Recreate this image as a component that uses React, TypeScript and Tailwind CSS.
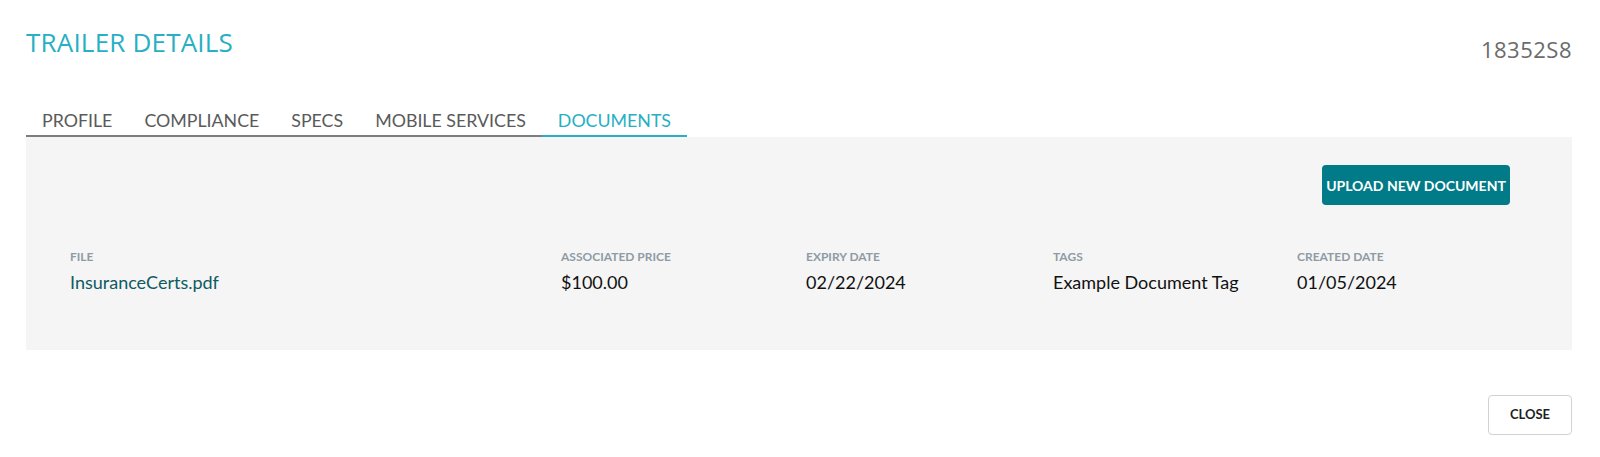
import { useState } from "react";

const tabs = ["PROFILE", "COMPLIANCE", "SPECS", "MOBILE SERVICES", "DOCUMENTS"];

const documents = [
	{
		id: 1,
		file: "InsuranceCerts.pdf",
		price: "$100.00",
		expiry: "02/22/2024",
		tags: "Example Document Tag",
		created: "01/05/2024",
	},
];

function Label({ children }: { children: React.ReactNode }) {
	return (
		<div className="text-[12px] leading-[14px] font-bold uppercase text-[#8e9ba4]">
			{children}
		</div>
	);
}

export default function App() {
	const [activeTab, setActiveTab] = useState("DOCUMENTS");

	return (
		<div className="h-[457px] w-full bg-white font-['Lato',sans-serif]">
			<div className="pl-[26px] pr-[28px]">
				{/* Header */}
				<div className="flex items-start justify-between pt-[29px]">
					<h1 className="font-['Open_Sans',sans-serif] text-[26px] leading-[26px] font-normal tracking-[0.2px] text-[#27afc3]">
						TRAILER DETAILS
					</h1>
					<div className="mt-[9px] font-['Open_Sans',sans-serif] text-[22px] leading-[22px] tracking-[0.5px] text-[#6b6b6b]">
						18352S8
					</div>
				</div>

				{/* Tabs */}
				<div className="mt-[50px] flex">
					{tabs.map((tab) => (
						<button
							key={tab}
							type="button"
							onClick={() => setActiveTab(tab)}
							className={`border-b-2 px-4 pb-[5px] text-[17.8px] leading-[20px] ${
								activeTab === tab
									? "border-[#27afc3] text-[#27afc3]"
									: "border-[#7d7d7d] text-[#5a5a5a]"
							}`}
						>
							{tab}
						</button>
					))}
				</div>

				{/* Documents panel */}
				<div className="h-[213px] bg-[#f5f5f5] pt-[28px] pr-[62px] pl-[44px]">
					<div className="flex justify-end">
						<button
							type="button"
							className="h-[40px] w-[188px] rounded-[4px] bg-[#017b87] text-[14px] font-bold text-white"
						>
							UPLOAD NEW DOCUMENT
						</button>
					</div>

					{documents.map((doc) => (
						<div
							key={doc.id}
							className="mt-[45px] grid grid-cols-[491px_245px_247px_244px_1fr]"
						>
							<div>
								<Label>File</Label>
								<a className="mt-[7px] block text-[18px] leading-[22px] text-[#0e5b64]">
									{doc.file}
								</a>
							</div>
							<div>
								<Label>Associated Price</Label>
								<div className="mt-[7px] text-[18px] leading-[22px] text-[#111]">{doc.price}</div>
							</div>
							<div>
								<Label>Expiry Date</Label>
								<div className="mt-[7px] text-[18px] leading-[22px] text-[#111]">{doc.expiry}</div>
							</div>
							<div>
								<Label>Tags</Label>
								<div className="mt-[7px] text-[18px] leading-[22px] text-[#111]">{doc.tags}</div>
							</div>
							<div>
								<Label>Created Date</Label>
								<div className="mt-[7px] text-[18px] leading-[22px] text-[#111]">{doc.created}</div>
							</div>
						</div>
					))}
				</div>

				{/* Footer */}
				<div className="mt-[45px] flex justify-end">
					<button
						type="button"
						className="h-[40px] w-[84px] rounded-[4px] border border-[#d2d2d2] bg-white text-[13px] font-bold text-[#1f1f1f]"
					>
						CLOSE
					</button>
				</div>
			</div>
		</div>
	);
}
